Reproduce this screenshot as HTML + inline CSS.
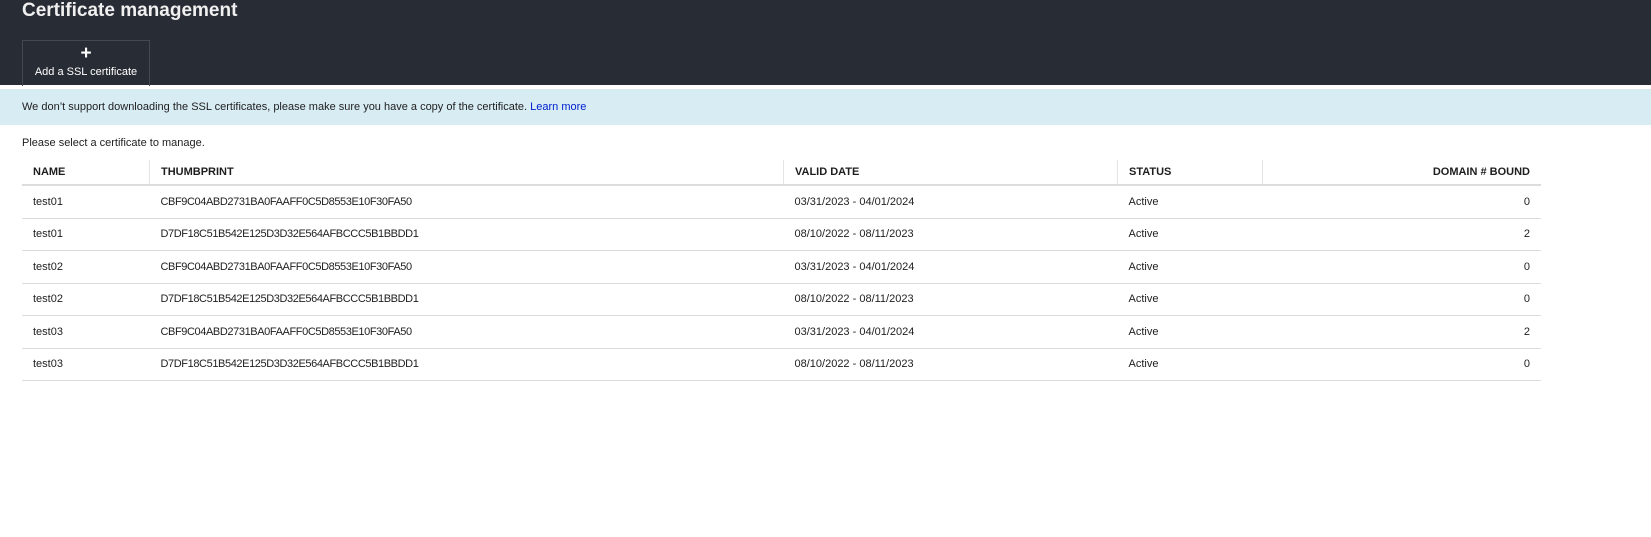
<!DOCTYPE html>
<html><head><style>
body{margin:0;width:1651px;height:537px;background:#fff;font-family:"Liberation Sans",sans-serif;font-size:11px;color:#1e1e1e;overflow:hidden;position:relative}
.hdr{position:absolute;left:0;top:0;width:1651px;height:85px;background:#282c35}
.title{position:absolute;left:22px;top:0;color:#f0f0f0;font-size:19px;font-weight:bold;line-height:22px}
.btn{position:absolute;left:22px;top:40px;width:126px;height:45px;border:1px solid #444852;border-bottom:none;color:#fff;text-align:center}
.btn .p{font-size:19px;font-weight:bold;line-height:14px;margin-top:6px}
.btn .t{font-size:11px;margin-top:5px}
.info{position:absolute;left:0;top:89px;width:1651px;height:36px;background:#d8ecf4;line-height:36px;padding-left:22px;box-sizing:border-box}
.info a{color:#0020d0;text-decoration:none}
.sel{position:absolute;left:22px;top:137px}
table{position:absolute;left:22px;top:160px;width:1519px;border-collapse:collapse}
th{height:24px;text-align:left;font-weight:bold;font-size:11px;padding:0 11px;border-bottom:2px solid #dcdcdc;border-left:1px solid #e4e4e4}
th:first-child{border-left:none}
td{height:31.5px;padding:0 11px;border-bottom:1px solid #dcdcdc}
td:nth-child(2){letter-spacing:-0.4px}
.r{text-align:right}
</style></head><body>
<div class="hdr"><div class="title">Certificate management</div>
<div class="btn"><div class="p">+</div><div class="t">Add a SSL certificate</div></div></div>
<div class="info">We don’t support downloading the SSL certificates, please make sure you have a copy of the certificate. <a>Learn more</a></div>
<div class="sel">Please select a certificate to manage.</div>
<table>
<tr><th style="width:105px">NAME</th><th style="width:611px">THUMBPRINT</th><th style="width:311px">VALID DATE</th><th style="width:122px">STATUS</th><th class="r">DOMAIN # BOUND</th></tr>
<tr><td>test01</td><td>CBF9C04ABD2731BA0FAAFF0C5D8553E10F30FA50</td><td>03/31/2023 - 04/01/2024</td><td>Active</td><td class="r">0</td></tr>
<tr><td>test01</td><td>D7DF18C51B542E125D3D32E564AFBCCC5B1BBDD1</td><td>08/10/2022 - 08/11/2023</td><td>Active</td><td class="r">2</td></tr>
<tr><td>test02</td><td>CBF9C04ABD2731BA0FAAFF0C5D8553E10F30FA50</td><td>03/31/2023 - 04/01/2024</td><td>Active</td><td class="r">0</td></tr>
<tr><td>test02</td><td>D7DF18C51B542E125D3D32E564AFBCCC5B1BBDD1</td><td>08/10/2022 - 08/11/2023</td><td>Active</td><td class="r">0</td></tr>
<tr><td>test03</td><td>CBF9C04ABD2731BA0FAAFF0C5D8553E10F30FA50</td><td>03/31/2023 - 04/01/2024</td><td>Active</td><td class="r">2</td></tr>
<tr><td>test03</td><td>D7DF18C51B542E125D3D32E564AFBCCC5B1BBDD1</td><td>08/10/2022 - 08/11/2023</td><td>Active</td><td class="r">0</td></tr>
</table>
</body></html>
